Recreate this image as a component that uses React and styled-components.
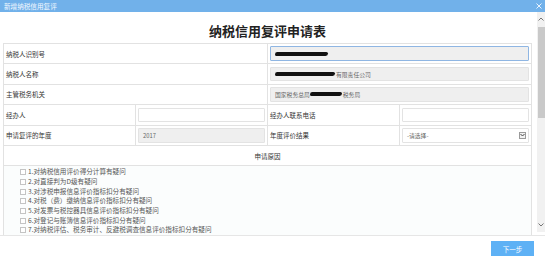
import styled, { createGlobalStyle } from 'styled-components';

const reasons = [
  '1.对纳税信用评价得分计算有疑问',
  '2.对直接判为D级有疑问',
  '3.对涉税申报信息评价指标扣分有疑问',
  '4.对税（费）缴纳信息评价指标扣分有疑问',
  '5.对发票与税控器具信息评价指标扣分有疑问',
  '6.对登记与账簿信息评价指标扣分有疑问',
  '7.对纳税评估、税务审计、反避税调查信息评价指标扣分有疑问',
];

const GlobalStyle = createGlobalStyle`
  html, body {
    margin: 0;
    padding: 0;
    background: #fff;
  }
  body {
    font-family: "Noto Sans CJK SC", "Noto Sans", sans-serif;
  }
`;

function App() {
  return (
    <>
      <GlobalStyle />
      <Window>
        <TitleBar>
          <span>新增纳税信用复评</span>
          <Close>
            <svg width="6" height="6" viewBox="0 0 6 6">
              <path d="M0.5 0.5 L5.5 5.5 M5.5 0.5 L0.5 5.5" stroke="#eaf4ff" strokeWidth="1" />
            </svg>
          </Close>
        </TitleBar>
        <Body>
          <Content>
            <Heading>纳税信用复评申请表</Heading>
            <Table>
              <Label $span={2}>纳税人识别号</Label>
              <Field $span={2}>
                <Input $focused $grey>
                  <Blob $w={53} />
                </Input>
              </Field>

              <Label $span={2}>纳税人名称</Label>
              <Field $span={2}>
                <Input $grey>
                  <Blob $w={60} />
                  有限责任公司
                </Input>
              </Field>

              <Label $span={2}>主管税务机关</Label>
              <Field $span={2}>
                <Input $grey>
                  国家税务总局
                  <Blob $w={32} />
                  税务局
                </Input>
              </Field>

              <Label>经办人</Label>
              <Field>
                <Input />
              </Field>
              <Label>经办人联系电话</Label>
              <Field>
                <Input />
              </Field>

              <Label>申请复评的年度</Label>
              <Field>
                <Input $grey>2017</Input>
              </Field>
              <Label>年度评价结果</Label>
              <Field>
                <Select>
                  -请选择-
                  <Arrow>
                    <svg width="5" height="4" viewBox="0 0 5 4">
                      <path d="M0.5 1 L2.5 3 L4.5 1" fill="none" stroke="#444" strokeWidth="1" />
                    </svg>
                  </Arrow>
                </Select>
              </Field>

              <Section $span={4}>申请原因</Section>

              <Reasons $span={4}>
                {reasons.map((text) => (
                  <Reason key={text}>
                    <Box />
                    {text}
                  </Reason>
                ))}
              </Reasons>
            </Table>
          </Content>
          <Scrollbar>
            <ScrollArrow>
              <svg width="6" height="4" viewBox="0 0 6 4">
                <path d="M0.5 3.5 L3 1 L5.5 3.5" fill="none" stroke="#666" strokeWidth="0.9" />
              </svg>
            </ScrollArrow>
            <Track>
              <Thumb />
            </Track>
            <ScrollArrow>
              <svg width="6" height="4" viewBox="0 0 6 4">
                <path d="M0.5 0.5 L3 3 L5.5 0.5" fill="none" stroke="#666" strokeWidth="0.9" />
              </svg>
            </ScrollArrow>
          </Scrollbar>
        </Body>
        <Footer>
          <NextButton>下一步</NextButton>
        </Footer>
      </Window>
    </>
  );
}

const Window = styled.div`
  width: 545px;
  height: 261px;
  display: flex;
  flex-direction: column;
  background: #fff;
  overflow: hidden;
`;

const TitleBar = styled.div`
  height: 12px;
  flex: none;
  display: flex;
  align-items: center;
  justify-content: space-between;
  padding: 0 3px 0 4px;
  background: #71b1ea;
  color: #f4f9ff;
  font-size: 6.6px;
  line-height: 12px;
`;

const Close = styled.span`
  display: flex;
  align-items: center;
`;

const Body = styled.div`
  height: 224px;
  flex: none;
  display: flex;
  border-bottom: 1px solid #e6e6e6;
  box-sizing: border-box;
`;

const Content = styled.div`
  flex: 1;
  overflow: hidden;
  padding: 0 5px 0 3px;
`;

const Heading = styled.h1`
  margin: 0;
  height: 31px;
  box-sizing: border-box;
  padding-top: 12px;
  text-align: center;
  font-size: 13px;
  line-height: 14px;
  font-weight: bold;
  color: #222;
`;

const Table = styled.div`
  display: grid;
  grid-template-columns: repeat(4, 1fr);
  grid-auto-rows: 20.4px;
  border-top: 1px solid #e2e2e2;
  border-left: 1px solid #e2e2e2;
`;

const Cell = styled.div`
  grid-column: span ${(p) => p.$span || 1};
  border-right: 1px solid #e2e2e2;
  border-bottom: 1px solid #e2e2e2;
  display: flex;
  align-items: center;
  min-width: 0;
`;

const Label = styled(Cell)`
  padding-left: 2px;
  font-size: 6.5px;
  color: #333;
`;

const Field = styled(Cell)`
  padding: 0 2px;
`;

const Input = styled.div`
  flex: 1;
  height: 14.5px;
  box-sizing: border-box;
  display: flex;
  align-items: center;
  padding-left: 4px;
  border: 1px solid ${(p) => (p.$focused ? '#8fb6e3' : '#e3e3e3')};
  border-radius: 1px;
  background: ${(p) => (p.$grey ? '#efefef' : '#fff')};
  font-size: 5.8px;
  color: #666;
  white-space: nowrap;
`;

const Blob = styled.span`
  display: inline-block;
  width: ${(p) => p.$w}px;
  height: 4px;
  background: #111;
  border-radius: 3px 2px 3px 2px;
  margin-right: 1px;
`;

const Select = styled(Input)`
  justify-content: space-between;
  padding-right: 2px;
`;

const Arrow = styled.span`
  width: 7px;
  height: 7px;
  box-sizing: border-box;
  border: 1px solid #9a9a9a;
  background: #f2f2f2;
  display: flex;
  align-items: center;
  justify-content: center;
`;

const Section = styled(Cell)`
  justify-content: center;
  font-size: 6.5px;
  color: #333;
`;

const Reasons = styled(Cell)`
  grid-row: span 4;
  flex-direction: column;
  align-items: flex-start;
  justify-content: flex-start;
  padding: 1px 0 0 16px;
  background: #fbfdfd;
`;

const Reason = styled.label`
  display: flex;
  align-items: center;
  gap: 2px;
  height: 9.7px;
  line-height: 9.7px;
  font-size: 6.6px;
  color: #555;
  white-space: nowrap;
`;

const Box = styled.span`
  width: 6px;
  height: 6px;
  box-sizing: border-box;
  border: 1px solid #c4c4c4;
  background: #fff;
`;

const Scrollbar = styled.div`
  width: 8px;
  flex: none;
  display: flex;
  flex-direction: column;
  background: #f1f1f1;
  margin-bottom: 3px;
`;

const ScrollArrow = styled.div`
  height: 14px;
  display: flex;
  align-items: center;
  justify-content: center;
`;

const Track = styled.div`
  flex: 1;
  padding: 1px 0 0 1px;
`;

const Thumb = styled.div`
  height: 91px;
  width: 7px;
  background: #c9c9c9;
`;

const Footer = styled.div`
  flex: 1;
  display: flex;
  justify-content: flex-end;
  align-items: flex-start;
  padding: 5px 11px 0 0;
`;

const NextButton = styled.button`
  width: 43px;
  height: 15px;
  border: none;
  padding: 0;
  background: #5eb1f5;
  color: #fff;
  font-family: inherit;
  font-size: 6.5px;
  cursor: pointer;
`;

export default App;
